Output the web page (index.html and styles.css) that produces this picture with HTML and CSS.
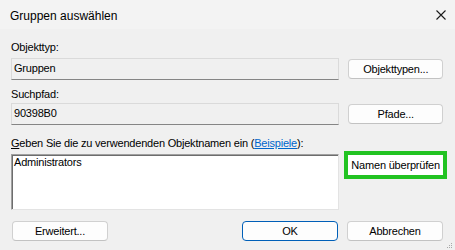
FILE: index.html
```html
<!DOCTYPE html>
<html lang="de">
<head>
<meta charset="utf-8">
<link rel="stylesheet" href="styles.css">
</head>
<body>
<div class="dialog">
  <div class="titlebar">
    <span class="title">Gruppen auswählen</span>
    <svg class="close" width="10" height="10" viewBox="0 0 10 10"><path d="M0.5 0.5 L9.5 9.5 M9.5 0.5 L0.5 9.5" stroke="#1a1a1a" stroke-width="1.1"/></svg>
  </div>
  <div class="content">
    <div class="label l1">Objekttyp:</div>
    <div class="row r1">
      <div class="field">Gruppen</div>
      <button class="btn">Objekttypen...</button>
    </div>
    <div class="label l2">Suchpfad:</div>
    <div class="row r2">
      <div class="field">90398B0</div>
      <button class="btn">Pfade...</button>
    </div>
    <div class="label l3"><u>G</u>eben Sie die zu verwendenden Objektnamen ein (<a class="link">Beispiele</a>):</div>
    <div class="row r3">
      <div class="names">Administrators</div>
      <button class="btn check">Namen überprüfen</button>
    </div>
    <div class="bottom">
      <button class="btn adv">Erweitert...</button>
      <div class="spacer"></div>
      <button class="btn ok">OK</button>
      <button class="btn">Abbrechen</button>
    </div>
  </div>
  <svg class="grip" width="6" height="6" viewBox="0 0 6 6" fill="#a8a8a8"><rect x="4" y="0" width="1" height="1"/><rect x="2" y="2" width="1" height="1"/><rect x="4" y="2" width="1" height="1"/><rect x="0" y="4" width="1" height="1"/><rect x="2" y="4" width="1" height="1"/><rect x="4" y="4" width="1" height="1"/></svg>
</div>
</body>
</html>
```
FILE: styles.css
```css
html, body {
  margin: 0;
  padding: 0;
}
body {
  background: #f0f0f0;
  font-family: "Liberation Sans", Arial, sans-serif;
  font-size: 11px;
  letter-spacing: -0.2px;
  color: #000;
}
.dialog {
  position: relative;
  width: 455px;
  height: 250px;
  overflow: hidden;
  background: #f0f0f0;
}
.titlebar {
  height: 29px;
  background: #f3f3f3;
  display: flex;
  align-items: center;
  padding-left: 10px;
  padding-right: 9px;
}
.title {
  font-size: 12px;
  letter-spacing: 0;
  flex: 1;
  color: #000;
  padding-top: 2px;
}
.close {
  display: block;
  margin-top: 1px;
}
.content {
  padding: 0 12px 0 11px;
}
.label {
  height: 13px;
  line-height: 13px;
  white-space: nowrap;
}
.l1 { margin-top: 12px; }
.l2 { margin-top: 8px; }
.l3 { margin-top: 12px; }
.row {
  display: flex;
  align-items: center;
  gap: 9px;
}
.r1 { margin-top: 4px; }
.r2 { margin-top: 2px; }
.r3 { margin-top: 4px; align-items: flex-start; }
.field {
  width: 324px;
  height: 18px;
  line-height: 18px;
  padding: 0 2px 2px 2px;
  border: 1px solid #dadada;
  border-bottom-color: #858585;
  background: #f0f0f0;
}
.btn {
  width: 95px;
  height: 20px;
  padding: 0;
  margin: 0;
  background: #fdfdfd;
  border: 1px solid #d0d0d0;
  border-bottom-color: #c2c2c2;
  border-radius: 4px;
  font-family: "Liberation Sans", Arial, sans-serif;
  font-size: 11px;
  letter-spacing: -0.2px;
  color: #000;
  line-height: 16px;
}
.names {
  width: 323px;
  height: 52px;
  padding: 1px 2px;
  line-height: 13px;
  background: #fff;
  border: 1px solid;
  border-color: #a0a0a0 #e3e3e3 #e3e3e3 #a0a0a0;
  box-shadow: inset 1px 1px 0 #6d6d6d;
}
.check {
  margin-top: 1px;
  border-radius: 0;
  border-color: #fff;
  background: #fff;
  outline: 4px solid #22c322;
  outline-offset: 0;
}
.link {
  color: #0066cc;
  text-decoration: underline;
}
.bottom {
  display: flex;
  margin-top: 11px;
  gap: 9px;
}
.bottom .btn {
  width: 96px;
}
.adv {
  margin-left: 1px;
}
.spacer {
  flex: 1;
}
.ok {
  border: 1px solid #005fb8;
}
.grip {
  position: absolute;
  right: 2px;
  bottom: 1px;
}
```
